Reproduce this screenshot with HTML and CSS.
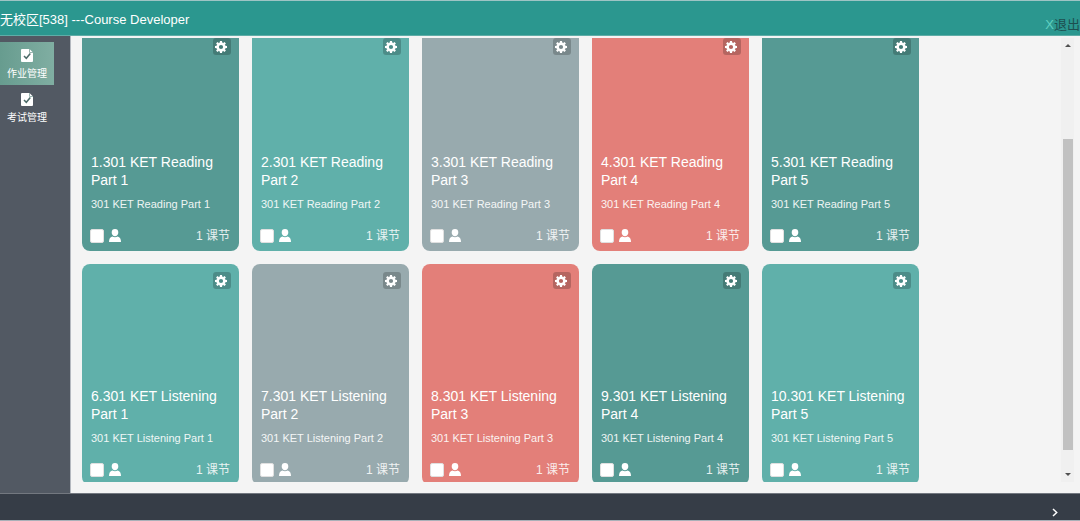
FILE: index.html
```html
<!DOCTYPE html>
<html lang="zh-CN">
<head>
<meta charset="utf-8">
<title>Course Developer</title>
<link rel="stylesheet" href="styles.css">
</head>
<body>
<svg class="symbols" aria-hidden="true">
  <symbol id="gear" viewBox="0 0 12 12">
    <g fill="currentColor">
      <path fill-rule="evenodd" d="M6 1.4a4.6 4.6 0 1 0 0 9.2a4.6 4.6 0 0 0 0-9.2zM6 3.9a2.1 2.1 0 1 1 0 4.2a2.1 2.1 0 0 1 0-4.2z"/>
      <path d="M5 0h2l.3 2H4.7zM5 12h2l.3-2H4.7zM0 5v2l2 .3V4.700zM12 5v2l-2 .3V4.700zM1.100 2.500l1.400-1.400L4.100 2.300 2.300 4.100zM9.500 1.100l1.400 1.400-1.200 1.600-1.800-1.800zM10.900 9.500l-1.400 1.400-1.600-1.200 1.800-1.800zM2.500 10.900l-1.400-1.400 1.200-1.600 1.800 1.800z"/>
    </g>
  </symbol>
  <symbol id="person" viewBox="0 0 12 13">
    <path fill="currentColor" d="M6 0a3.300 3.500 0 0 1 3.300 3.600C9.300 5.600 7.900 7.300 6 7.300S2.700 5.600 2.700 3.600A3.300 3.500 0 0 1 6 0zM3.300 7.500Q6 9 8.700 7.500Q12 8.400 12 13H0Q0 8.400 3.300 7.500z"/>
  </symbol>
  <symbol id="task" viewBox="0 0 12 13">
    <path fill="currentColor" d="M1 0h7.500L12 3.500V12a1 1 0 0 1-1 1H1a1 1 0 0 1-1-1V1a1 1 0 0 1 1-1z"/>
    <path class="tick" d="M3 7l2.300 2.300L9.300 4.500"/>
    <path class="fold" d="M8.500 0v3.500H12"/>
  </symbol>
</svg>
<header class="topbar">
  <h1 class="topbar-title">无校区[538] ---Course Developer</h1>
  <a class="logout" href="#"><span class="logout-mark">X</span>退出</a>
</header>
<div class="workspace">
  <nav class="sidebar">
    <a class="nav-item active" href="#"><svg class="nav-icon"><use href="#task"/></svg>作业管理</a>
    <a class="nav-item" href="#"><svg class="nav-icon"><use href="#task"/></svg>考试管理</a>
  </nav>
  <main class="content">
    <div class="viewport"><div class="cards" id="cards"></div></div>
    <div class="scrollbar" aria-hidden="true">
      <span class="arrow up"></span>
      <div class="track"><div class="thumb"></div></div>
      <span class="arrow down"></span>
    </div>
  </main>
</div>
<footer class="bottombar">
  <button class="next" aria-label="Next"><svg class="next-icon" viewBox="0 0 6 9"><path d="M1 1l3.700 3.500L1 8"/></svg></button>
</footer>
<script src="cards.js"></script>
</body>
</html>
```

FILE: styles.css
```css
* { box-sizing: border-box; }

body {
  margin: 0;
  height: 100vh;
  display: flex;
  flex-direction: column;
  overflow: hidden;
  background: #f4f4f4;
  font-family: "Liberation Sans", "Noto Sans CJK SC", sans-serif;
}

.symbols { position: absolute; width: 0; height: 0; }

.topbar {
  flex: none;
  display: flex;
  justify-content: space-between;
  height: 36px;
  border-top: 1px solid #9ec4c4;
  border-bottom: 1px solid #5fada7;
  background: #2b978f;
}

.topbar-title {
  margin: 0;
  padding-top: 9px;
  font-size: 13px;
  font-weight: 400;
  line-height: 20px;
  color: #fff;
}

.logout {
  padding-top: 14px;
  font-size: 13px;
  line-height: 20px;
  color: #1d4f4f;
  text-decoration: none;
}

.logout-mark { color: #5fd0c0; }

.workspace { flex: 1; display: flex; min-height: 0; }

.sidebar {
  flex: none;
  width: 71px;
  padding-top: 6px;
  border-right: 1px solid #b4b8bf;
  background: #525963;
}

.nav-item {
  display: flex;
  flex-direction: column;
  align-items: center;
  gap: 5px;
  width: 54px;
  height: 44px;
  padding-top: 7px;
  font-size: 10px;
  line-height: 14px;
  color: #fff;
  text-decoration: none;
}

.nav-item.active {
  height: 43px;
  background: linear-gradient(90deg, #679c8f, #80aea2);
}

.nav-icon { width: 12px; height: 13px; }

.nav-item + .nav-item { padding-top: 8px; }

.tick { fill: none; stroke: #4c6b69; stroke-width: 1.5; }
.fold { fill: none; stroke: #9ab5b0; stroke-width: 1; }

.content {
  flex: 1;
  display: flex;
  min-width: 0;
  padding: 2px 6px 11px 11px;
}

.viewport {
  flex: 1;
  overflow: hidden;
}

.cards {
  display: flex;
  flex-wrap: wrap;
  gap: 13px;
  max-width: 850px;
  margin-top: -8px;
}

.card {
  display: flex;
  flex-direction: column;
  width: 157px;
  height: 221px;
  padding: 8px 9px 7px;
  border-radius: 8px;
  color: #fff;
}

.card.pine { background: #569a94; }
.card.mint { background: #60b0aa; }
.card.slate { background: #98aaae; }
.card.coral { background: #e37f79; }

.settings {
  display: flex;
  align-items: center;
  justify-content: center;
  align-self: flex-end;
  width: 18px;
  height: 17px;
  margin-right: -1px;
  padding: 0 2px 0 0;
  border: 0;
  border-radius: 3px;
  background: rgba(0, 0, 0, .2);
  color: #fff;
}

.settings-icon { width: 12px; height: 12px; }

.card-title {
  margin: auto 0 0;
  font-size: 14px;
  font-weight: 400;
  line-height: 18px;
}

.card-subtitle {
  margin: 8px 0 0;
  font-size: 11px;
  line-height: 14px;
  opacity: .9;
}

.card-foot {
  display: flex;
  align-items: center;
  gap: 5px;
  height: 16px;
  margin: 17px 0 0 -1px;
}

.pick {
  appearance: none;
  width: 14px;
  height: 14px;
  margin: 0;
  border: 1px solid #e0e0e0;
  border-radius: 2px;
  background: #fff;
}

.person-icon { width: 12px; height: 13px; margin-bottom: 2px; }

.lessons {
  margin-left: auto;
  font-size: 12px;
  line-height: 16px;
  opacity: .85;
}

.scrollbar {
  flex: none;
  display: flex;
  flex-direction: column;
  align-items: center;
  justify-content: space-between;
  width: 13px;
  padding: 6px 1px;
  background: #f0f0f0;
}

.arrow { border: 3px solid transparent; }
.arrow.up { border-top: 0; border-bottom-color: #505050; }
.arrow.down { border-bottom: 0; border-top-color: #505050; }

.track { flex: 1; width: 10px; margin: 6px 0; }
.thumb { height: 75%; margin-top: 86px; background: #c1c1c1; }

.bottombar {
  flex: none;
  display: flex;
  justify-content: flex-end;
  height: 28px;
  padding: 10px 19px 0 0;
  border-top: 1px solid #737880;
  border-bottom: 1px solid #a9b0b8;
  background: #363d47;
}

.next {
  display: flex;
  align-items: center;
  justify-content: center;
  width: 13px;
  height: 16px;
  padding: 0;
  border: 0;
  background: none;
}

.next-icon {
  width: 6px;
  height: 9px;
  fill: none;
  stroke: #fff;
  stroke-width: 1.5;
}
```

FILE: cards.js
```js
const tones = ["pine", "mint", "slate", "coral"];
const list = document.getElementById("cards");

for (let i = 0; i < 10; i++) {
  const skill = i < 5 ? "Reading" : "Listening";
  const name = `301 KET ${skill} Part ${(i % 5) + 1}`;
  list.insertAdjacentHTML("beforeend", `
    <article class="card ${tones[i % 4]}">
      <button class="settings" aria-label="Settings"><svg class="settings-icon"><use href="#gear"/></svg></button>
      <h2 class="card-title">${i + 1}.${name}</h2>
      <p class="card-subtitle">${name}</p>
      <div class="card-foot">
        <input class="pick" type="checkbox" aria-label="${name}">
        <svg class="person-icon"><use href="#person"/></svg>
        <span class="lessons">1 课节</span>
      </div>
    </article>`);
}
```
